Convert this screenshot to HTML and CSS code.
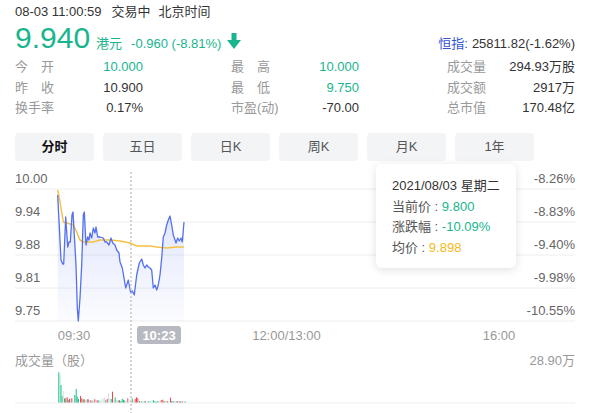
FILE: index.html
```html
<!DOCTYPE html>
<html lang="zh-CN">
<head>
<meta charset="utf-8">
<title>分时</title>
<link rel="stylesheet" href="styles.css">
</head>
<body>
<div class="page">
  <div class="top">
    <div class="line1"><span>08-03 11:00:59</span><span class="status">交易中</span><span class="tz">北京时间</span></div>
    <div class="line2">
      <span class="price">9.940</span>
      <span class="unit">港元</span>
      <span class="chg">-0.960 (-8.81%)</span>
      <svg class="arrow" width="14" height="16" viewBox="0 0 14 16"><path d="M4.5 0H9.5V7H14L7 16L0 7H4.5Z"/></svg>
      <span class="spacer"></span>
      <span class="idx-label">恒指:</span>
      <span class="idx-val">25811.82(-1.62%)</span>
    </div>
    <div class="stats">
      <div class="cell"><span class="lbl">今　开</span><span class="val up">10.000</span></div>
      <div class="cell"><span class="lbl">最　高</span><span class="val up">10.000</span></div>
      <div class="cell"><span class="lbl">成交量</span><span class="val">294.93万股</span></div>
      <div class="cell"><span class="lbl">昨　收</span><span class="val">10.900</span></div>
      <div class="cell"><span class="lbl">最　低</span><span class="val up">9.750</span></div>
      <div class="cell"><span class="lbl">成交额</span><span class="val">2917万</span></div>
      <div class="cell"><span class="lbl">换手率</span><span class="val">0.17%</span></div>
      <div class="cell"><span class="lbl">市盈(动)</span><span class="val">-70.00</span></div>
      <div class="cell"><span class="lbl">总市值</span><span class="val">170.48亿</span></div>
    </div>
    <div class="tabs">
      <div class="tab active">分时</div>
      <div class="tab">五日</div>
      <div class="tab">日K</div>
      <div class="tab">周K</div>
      <div class="tab">月K</div>
      <div class="tab">1年</div>
    </div>
  </div>
  <div class="chart">
    <svg class="plot" width="605" height="252" viewBox="0 161 605 252">
      <defs>
        <linearGradient id="area" x1="0" y1="0" x2="0" y2="1">
          <stop offset="0" stop-color="#5470f0" stop-opacity="0.2"/>
          <stop offset="1" stop-color="#5470f0" stop-opacity="0.02"/>
        </linearGradient>
      </defs>
      <g class="grid">
        <line x1="15" y1="189" x2="575" y2="189"/>
        <line x1="15" y1="222" x2="575" y2="222"/>
        <line x1="15" y1="255" x2="575" y2="255"/>
        <line x1="15" y1="288" x2="575" y2="288"/>
        <line x1="15" y1="321" x2="575" y2="321"/>
        <line x1="15" y1="403" x2="575" y2="403"/>
      </g>
      <g class="ylab">
        <text x="15" y="178">10.00</text>
        <text x="15" y="211">9.94</text>
        <text x="15" y="244">9.88</text>
        <text x="15" y="277">9.81</text>
        <text x="15" y="310">9.75</text>
      </g>
      <g class="ylab right">
        <text x="575" y="178">-8.26%</text>
        <text x="575" y="211">-8.83%</text>
        <text x="575" y="244">-9.40%</text>
        <text x="575" y="277">-9.98%</text>
        <text x="575" y="310">-10.55%</text>
      </g>
      <polygon class="fill" points="57.7,195 61,260 62.7,264 63.7,264 65.7,217 67.7,247 69,242 70.3,242 72,215 73,212 74.7,242 76,265 77.3,308 78.3,321 80,298 81.7,265 83.3,215 84.3,212 86,245 87.7,237 89,240 90,233 91.7,238 93.3,228 95,233 96,227 97.7,237 100,237 103.3,238 105,242 106.7,242 109,245 111,238 112.7,243 115,245 116.7,250 119,253 120,262 122.3,268 124,278 125.7,288 128.3,280 130.7,293 132.3,291 134.3,295 136.7,275 139.3,263 141.7,259 143.3,265 145,268 146.7,265 148.3,267 150,268 151.7,270 153.3,288 155,285 156.7,290 158.3,285 160,275 161.7,258 163.3,237 165,233 166.7,225 168.3,220 170,216 171.7,225 173.3,235 176,243 177.7,238 179.3,241 181,238 182.3,242 184,222 184,321 57.7,321"/>
      <polyline class="avg" points="57.7,190 60,202 63.3,222 66.7,223 73.3,225 76.7,232 80,240 83.3,242 93.3,242 100,240 110,240 120,241 130,243 136.7,246 150,246 156.7,247 166.7,248 176.7,247 184,247"/>
      <polyline class="price-line" points="57.7,195 61,260 62.7,264 63.7,264 65.7,217 67.7,247 69,242 70.3,242 72,215 73,212 74.7,242 76,265 77.3,308 78.3,321 80,298 81.7,265 83.3,215 84.3,212 86,245 87.7,237 89,240 90,233 91.7,238 93.3,228 95,233 96,227 97.7,237 100,237 103.3,238 105,242 106.7,242 109,245 111,238 112.7,243 115,245 116.7,250 119,253 120,262 122.3,268 124,278 125.7,288 128.3,280 130.7,293 132.3,291 134.3,295 136.7,275 139.3,263 141.7,259 143.3,265 145,268 146.7,265 148.3,267 150,268 151.7,270 153.3,288 155,285 156.7,290 158.3,285 160,275 161.7,258 163.3,237 165,233 166.7,225 168.3,220 170,216 171.7,225 173.3,235 176,243 177.7,238 179.3,241 181,238 182.3,242 184,222"/>
      <g class="xlab">
        <text x="74" y="335">09:30</text>
        <text x="286.5" y="335">12:00/13:00</text>
        <text x="499" y="335">16:00</text>
      </g>
      <rect class="tag" x="137" y="326" width="44" height="18" rx="3"/>
      <text class="tag-text" x="159" y="335">10:23</text>
      <text class="vol-title" x="15" y="360">成交量（股）</text>
      <text class="vol-max" x="575" y="360">28.90万</text>
      <g class="bars">
        <rect class="g" x="58.3" y="372.3" width="1" height="30.2"/>
        <rect class="lg" x="59.5" y="375" width="1" height="27.5"/>
        <rect class="g" x="60.5" y="385" width="1" height="17.5"/>
        <rect class="g" x="61.7" y="396" width="1" height="6.5"/>
        <rect class="y" x="62.7" y="391" width="1" height="11.5"/>
        <rect class="g" x="64" y="398.3" width="1" height="4.2"/>
        <rect class="r" x="65.3" y="398.3" width="1" height="4.2"/>
        <rect class="r" x="66.7" y="397.3" width="1" height="5.2"/>
        <rect class="g" x="67.7" y="400" width="1" height="2.5"/>
        <rect class="r" x="69" y="399" width="1" height="3.5"/>
        <rect class="y" x="70" y="397.7" width="1" height="4.8"/>
        <rect class="r" x="71.3" y="398.3" width="1" height="4.2"/>
        <rect class="y" x="72.7" y="400" width="1" height="2.5"/>
        <rect class="g" x="74.3" y="395" width="1" height="7.5"/>
        <rect class="g" x="75.7" y="389" width="1" height="13.5"/>
        <rect class="g" x="76.7" y="396.7" width="1" height="5.8"/>
        <rect class="g" x="78" y="399" width="1" height="3.5"/>
        <rect class="r" x="80" y="396" width="1" height="6.5"/>
        <rect class="r" x="81.3" y="398.3" width="1" height="4.2"/>
        <rect class="g" x="82.7" y="399.3" width="1" height="3.2"/>
        <rect class="r" x="83.7" y="399.3" width="1" height="3.2"/>
        <rect class="y" x="85" y="400" width="1" height="2.5"/>
        <rect class="g" x="86.7" y="399.3" width="1" height="3.2"/>
        <rect class="r" x="87.7" y="399.3" width="1" height="3.2"/>
        <rect class="y" x="89" y="400" width="1" height="2.5"/>
        <rect class="r" x="90.3" y="400.3" width="1" height="2.2"/>
        <rect class="g" x="91.7" y="400.7" width="1" height="1.8"/>
        <rect class="y" x="92.7" y="399.7" width="1" height="2.8"/>
        <rect class="r" x="94.3" y="399.3" width="1" height="3.2"/>
        <rect class="y" x="95.3" y="400.7" width="1" height="1.8"/>
        <rect class="r" x="96.7" y="400.3" width="1" height="2.2"/>
        <rect class="g" x="98.3" y="400.3" width="1" height="2.2"/>
        <rect class="y" x="100" y="401" width="1" height="1.5"/>
        <rect class="y" x="101.3" y="399.3" width="1" height="3.2"/>
        <rect class="y" x="102.7" y="398.3" width="1" height="4.2"/>
        <rect class="y" x="104" y="397.7" width="1" height="4.8"/>
        <rect class="g" x="105.3" y="400.3" width="1" height="2.2"/>
        <rect class="r" x="106.7" y="399" width="1" height="3.5"/>
        <rect class="y" x="108" y="393" width="1" height="9.5"/>
        <rect class="y" x="109.3" y="398.3" width="1" height="4.2"/>
        <rect class="g" x="110.7" y="399" width="1" height="3.5"/>
        <rect class="r" x="112" y="391.7" width="1" height="10.8"/>
        <rect class="y" x="113.3" y="400.3" width="1" height="2.2"/>
        <rect class="g" x="114.7" y="397.3" width="1" height="5.2"/>
        <rect class="y" x="116" y="400.3" width="1" height="2.2"/>
        <rect class="g" x="117.7" y="400.3" width="1" height="2.2"/>
        <rect class="r" x="119" y="400.3" width="1" height="2.2"/>
        <rect class="g" x="120.3" y="401" width="1" height="1.5"/>
        <rect class="g" x="121.7" y="398.7" width="1" height="3.8"/>
        <rect class="g" x="123" y="399.7" width="1" height="2.8"/>
        <rect class="g" x="124.3" y="400.3" width="1" height="2.2"/>
        <rect class="y" x="125.7" y="401" width="1" height="1.5"/>
        <rect class="r" x="127.3" y="398.3" width="1" height="4.2"/>
        <rect class="y" x="128.7" y="401" width="1" height="1.5"/>
        <rect class="y" x="130" y="400.3" width="1" height="2.2"/>
        <rect class="g" x="131.7" y="398.3" width="1" height="4.2"/>
        <rect class="y" x="133.3" y="400.3" width="1" height="2.2"/>
        <rect class="r" x="134.7" y="399" width="1" height="3.5"/>
        <rect class="r" x="136" y="397.3" width="1" height="5.2"/>
        <rect class="r" x="137.3" y="398.3" width="1" height="4.2"/>
        <rect class="g" x="139" y="401" width="1" height="1.5"/>
        <rect class="g" x="140.7" y="401.3" width="1" height="1.2"/>
        <rect class="y" x="142" y="401.3" width="1" height="1.2"/>
        <rect class="g" x="143.7" y="401.3" width="1" height="1.2"/>
        <rect class="r" x="145" y="401.3" width="1" height="1.2"/>
        <rect class="y" x="146.7" y="401.3" width="1" height="1.2"/>
        <rect class="g" x="148.3" y="401" width="1" height="1.5"/>
        <rect class="y" x="150" y="401" width="1" height="1.5"/>
        <rect class="y" x="151.7" y="399.7" width="1" height="2.8"/>
        <rect class="g" x="153" y="400.3" width="1" height="2.2"/>
        <rect class="g" x="154.3" y="401.3" width="1" height="1.2"/>
        <rect class="g" x="155.7" y="401.7" width="1" height="0.8"/>
        <rect class="g" x="157.3" y="401" width="1" height="1.5"/>
        <rect class="y" x="159" y="401" width="1" height="1.5"/>
        <rect class="r" x="160.7" y="400" width="1" height="2.5"/>
        <rect class="r" x="162.3" y="399.7" width="1" height="2.8"/>
        <rect class="g" x="163.7" y="401" width="1" height="1.5"/>
        <rect class="y" x="165.3" y="401" width="1" height="1.5"/>
        <rect class="r" x="166.7" y="401" width="1" height="1.5"/>
        <rect class="y" x="168.3" y="401" width="1" height="1.5"/>
        <rect class="r" x="170" y="397.7" width="1" height="4.8"/>
        <rect class="g" x="171.3" y="401" width="1" height="1.5"/>
        <rect class="g" x="172.7" y="401" width="1" height="1.5"/>
        <rect class="y" x="174" y="401.3" width="1" height="1.2"/>
        <rect class="r" x="175.7" y="401.3" width="1" height="1.2"/>
        <rect class="g" x="177" y="401.3" width="1" height="1.2"/>
        <rect class="r" x="178.7" y="401.3" width="1" height="1.2"/>
        <rect class="g" x="180" y="401.3" width="1" height="1.2"/>
        <rect class="r" x="181.7" y="401.3" width="1" height="1.2"/>
        <rect class="y" x="183.3" y="401.3" width="1" height="1.2"/>
        <rect class="g" x="184.7" y="401.3" width="1" height="1.2"/>
      </g>
      <line class="cursor" x1="131" y1="172" x2="131" y2="413"/>
    </svg>
    <div class="tooltip">
      <div class="tt-row">2021/08/03 星期二</div>
      <div class="tt-row"><span class="tt-lbl">当前价 : </span><span class="tt-up">9.800</span></div>
      <div class="tt-row"><span class="tt-lbl">涨跌幅 : </span><span class="tt-up">-10.09%</span></div>
      <div class="tt-row"><span class="tt-lbl">均价 : </span><span class="tt-avg">9.898</span></div>
    </div>
  </div>
</div>
</body>
</html>
```
FILE: styles.css
```css
* { box-sizing: border-box; }
html, body { margin: 0; padding: 0; background: #fff; }
body {
  font-family: "Liberation Sans", "Noto Sans CJK SC", sans-serif;
  color: #333;
  font-size: 13px;
}
.page { width: 605px; height: 413px; overflow: hidden; }
.top { padding: 0 30px 0 15px; }

.line1 {
  display: flex;
  height: 23px;
  line-height: 23px;
  font-size: 13px;
  color: #333;
  overflow: hidden;
}
.line1 .status { margin-left: 10px; }
.line1 .tz { margin-left: 8px; }

.line2 {
  display: flex;
  align-items: baseline;
  height: 30px;
  line-height: 30px;
}
.price { font-size: 30px; color: #19b58e; }
.unit { margin-left: 6px; font-size: 13px; color: #19b58e; }
.chg { margin-left: 9px; font-size: 13px; color: #19b58e; }
.arrow { margin-left: 6px; align-self: flex-start; margin-top: 10px; fill: #19b58e; }
.spacer { flex: 1; }
.idx-label { font-size: 13px; color: #3553d6; }
.idx-val { margin-left: 4px; font-size: 13px; color: #333; }

.stats {
  display: grid;
  grid-template-columns: repeat(3, 128px);
  column-gap: 88px;
  margin-top: 4px;
}
.cell {
  display: flex;
  justify-content: space-between;
  height: 20.5px;
  line-height: 20.5px;
  overflow: hidden;
}
.lbl { color: #999; }
.val { color: #333; }
.val.up { color: #19b58e; }

.tabs {
  display: flex;
  gap: 9px;
  margin-top: 14.5px;
  height: 28px;
}
.tab {
  width: 79px;
  height: 28px;
  line-height: 28px;
  text-align: center;
  background: #f3f4f6;
  border-radius: 4px;
  color: #555;
  font-size: 13px;
}
.tab.active { color: #111; font-weight: bold; }

.chart { position: relative; width: 605px; height: 252px; }
.plot { display: block; }
.plot text {
  font-family: "Liberation Sans", "Noto Sans CJK SC", sans-serif;
  font-size: 13px;
  dominant-baseline: central;
}
.grid line { stroke: #eeeeee; stroke-width: 1; }
.ylab text { fill: #666; }
.ylab.right text { text-anchor: end; }
.xlab text { fill: #999; text-anchor: middle; }
.fill { fill: url(#area); }
.price-line { fill: none; stroke: #5470f0; stroke-width: 1.3; stroke-linejoin: round; }
.avg { fill: none; stroke: #f6c142; stroke-width: 1.5; stroke-linejoin: round; }
.tag { fill: #b7b9c0; }
.tag-text { fill: #fff; font-weight: bold; text-anchor: middle; }
.vol-title { fill: #999; }
.vol-max { fill: #999; text-anchor: end; }
.bars .g { fill: #19c08d; }
.bars .lg { fill: #a3e2cb; }
.bars .r { fill: #f4434c; }
.bars .y { fill: #dcdde2; }
.cursor { stroke: #c8c8c8; stroke-width: 1.5; stroke-dasharray: 2 2; }

.tooltip {
  position: absolute;
  left: 376px;
  top: 3px;
  width: 140px;
  height: 104px;
  padding: 12px 0 0 16px;
  background: #fff;
  border-radius: 6px;
  box-shadow: 0 2px 10px rgba(0, 0, 0, 0.12);
}
.tt-row {
  height: 20.5px;
  line-height: 20.5px;
  font-size: 13px;
  color: #333;
  white-space: nowrap;
}
.tt-lbl { color: #555; }
.tt-up { color: #19b58e; }
.tt-avg { color: #f6b91c; }
```
